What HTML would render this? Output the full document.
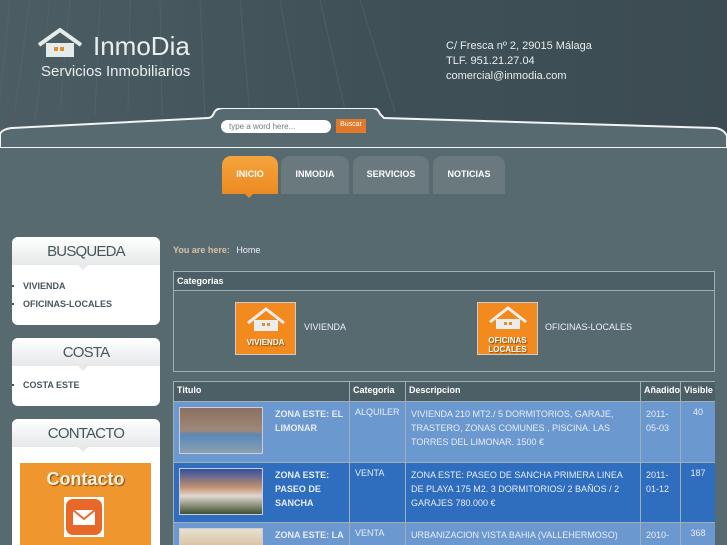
<!DOCTYPE html>
<html><head><meta charset="utf-8"><style>
*{margin:0;padding:0;box-sizing:border-box}
html{width:727px;height:545px;overflow:hidden}
body{width:727px;height:545px;overflow:hidden;background:#576a70;font-family:"Liberation Sans",sans-serif}
#wrap{position:relative;width:727px;height:545px;overflow:hidden}
.hdr{position:absolute;left:0;top:0;width:727px;height:140px;background:linear-gradient(90deg,#4c5d63 0%,#3f5157 50%,#3b4b51 100%)}
.a{position:absolute}
.w{color:#e8eeee}
.tab{position:absolute;top:156px;height:38px;background:#69797e;border-radius:9px 9px 0 0;color:#fff;font-size:9px;font-weight:bold;text-align:center;line-height:36px}
.box{position:absolute;left:12px;width:148px;background:#fff;border-radius:6px}
.box h3{height:28px;background:linear-gradient(#fff,#e6e8e9);border-radius:6px 6px 0 0;text-align:center;font-weight:normal;font-size:15px;color:#46565c;line-height:30px;letter-spacing:-0.8px;position:relative}
.box h3:after{content:"";position:absolute;left:66px;bottom:-5px;border:5px solid transparent;border-top-color:#e6e8e9;border-bottom:0}
.box li{list-style:none;font-size:9px;font-weight:bold;color:#46565c;margin-left:11px;height:18px;line-height:18px;position:relative}
.box li:before{content:"";position:absolute;left:-11px;top:8px;width:2px;height:2px;background:#46565c}
.tw{position:absolute;left:173px;top:381px;width:542px;height:164px;overflow:hidden}
table{border-collapse:collapse;width:542px;font-size:9px;table-layout:fixed}
td,th{border:1px solid #9fb0b4;vertical-align:top;padding:5px 5px;color:#e6eef8;overflow:hidden}
th{background:#4d5f66;text-align:left;color:#fff;height:20px;padding:3px 3px;font-size:9px}
.r1 td{background:#6c98d0}.r2 td{background:#2f6dbf}
.t{font-weight:bold;line-height:14px;width:70px;flex:none}
.d{line-height:14px}
.img{width:84px;height:47px;border:1px solid #ccd;display:block;flex:none}
</style></head><body><div id="wrap">
<div class="hdr"></div>
<svg class="a" style="left:0;top:0" width="727" height="140"><g stroke="#5a6b70" stroke-width="1" opacity=".5"><path d="M10 0 L0 100M30 0 L15 110M50 0 L35 120M70 0L60 110M100 0L95 115M130 0L128 110M160 0L162 115M200 0L205 120M240 0L250 115M280 0L300 110M320 0L345 110M360 0L395 112"/></g></svg>
<svg class="a" style="left:36px;top:28px" width="56" height="34"><path d="M3 17 L24 2 L45 17" fill="none" stroke="#e4eceb" stroke-width="4"/><rect x="10" y="15" width="28" height="14" fill="#e4eceb"/><rect x="18" y="19" width="4" height="4" fill="#e98a2c"/><rect x="24" y="19" width="4" height="4" fill="#e98a2c"/></svg>
<div class="a w" style="left:93px;top:31px;font-size:26px">InmoDia</div>
<div class="a w" style="left:41px;top:63px;font-size:15px">Servicios Inmobiliarios</div>
<div class="a w" style="left:446px;top:39px;font-size:11px;line-height:15px">C/ Fresca nº 2, 29015 Málaga<br>TLF. 951.21.27.04<br>comercial@inmodia.com</div>
<svg class="a" style="left:0;top:108px" width="727" height="40"><path d="M0 40 L0 26 Q2 21 12 20 L208 10 Q212 10 214 5 Q216 0 224 0 L372 0 Q378 0 380 6 L384 10 L715 20 Q724 21 727 28 L727 40 Z" fill="#566a70" stroke="#f2f4f4" stroke-width="2"/></svg>
<div class="a" style="left:221px;top:120px;width:110px;height:13px;background:#fff;border-radius:7px;font-size:8px;color:#778;padding-left:8px;line-height:13px">type a word here...</div>
<div class="a" style="left:336px;top:119px;width:30px;height:14px;background:#e2782a;font-size:7px;color:#fff;text-align:center;line-height:12px">Buscar</div>
<div class="tab" style="left:222px;width:56px;background:linear-gradient(#f6a43c,#ec8a22)">INICIO</div>
<div class="a" style="left:244px;top:193px;border:5px solid transparent;border-top-color:#ec8a22"></div>
<div class="tab" style="left:281px;width:68px">INMODIA</div>
<div class="tab" style="left:353px;width:76px">SERVICIOS</div>
<div class="tab" style="left:433px;width:72px">NOTICIAS</div>
<div class="box" style="top:237px;height:88px"><h3>BUSQUEDA</h3><ul style="margin-top:12px"><li>VIVIENDA</li><li>OFICINAS-LOCALES</li></ul></div>
<div class="box" style="top:338px;height:68px"><h3>COSTA</h3><ul style="margin-top:10px"><li>COSTA ESTE</li></ul></div>
<div class="box" style="top:419px;height:126px;border-radius:6px 6px 0 0"><h3>CONTACTO</h3></div>
<div class="a" style="left:20px;top:463px;width:131px;height:82px;background:#f0962e"><div style="color:#f8f0e0;font-weight:bold;font-size:18px;text-align:center;margin-top:6px;text-shadow:1px 1px 1px #7a4a10">Contacto</div>
<div style="position:absolute;left:44px;top:34px;width:40px;height:40px;background:#fff;padding:2px"><div style="width:36px;height:36px;background:#e8682a;border-radius:7px;position:relative"><svg width="36" height="36"><rect x="7" y="11" width="22" height="15" fill="#fff"/><path d="M7 11 L18 20 L29 11" fill="none" stroke="#e8682a" stroke-width="2"/></svg></div></div></div>
<div class="a" style="left:173px;top:245px;font-size:9px;color:#d8c2a8;font-weight:bold">You are here: <span style="color:#eef;font-weight:normal;margin-left:4px">Home</span></div>
<div class="a" style="left:173px;top:271px;width:542px;height:101px;border:1px solid #9fb0b4"><div style="height:19px;background:#4d5f66;border-bottom:1px solid #9fb0b4;color:#fff;font-size:9px;font-weight:bold;padding:4px 3px">Categorias</div></div>
<div class="a" style="left:235px;top:302px;width:61px;height:53px;background:#f28a1e;border:1px solid #ccc"><svg width="61" height="30"><path d="M12 20 L30 6 L48 20" fill="none" stroke="#eee" stroke-width="3"/><rect x="18" y="17" width="24" height="11" fill="#e8eeee"/><rect x="26" y="20" width="3" height="3" fill="#e98a2c"/><rect x="31" y="20" width="3" height="3" fill="#e98a2c"/></svg><div style="font-size:8px;font-weight:bold;color:#fff;text-align:center;text-shadow:1px 1px 1px #7a4a10">VIVIENDA</div></div>
<div class="a" style="left:304px;top:322px;font-size:9px;color:#eef">VIVIENDA</div>
<div class="a" style="left:477px;top:302px;width:61px;height:53px;background:#f28a1e;border:1px solid #ccc"><svg width="61" height="28"><path d="M12 19 L30 5 L48 19" fill="none" stroke="#eee" stroke-width="3"/><rect x="18" y="16" width="24" height="10" fill="#e8eeee"/><rect x="26" y="19" width="3" height="3" fill="#e98a2c"/><rect x="31" y="19" width="3" height="3" fill="#e98a2c"/></svg><div style="font-size:8px;font-weight:bold;color:#fff;text-align:center;line-height:9px;text-shadow:1px 1px 1px #7a4a10">OFICINAS<br>LOCALES</div></div>
<div class="a" style="left:545px;top:322px;font-size:9px;color:#eef">OFICINAS-LOCALES</div>
<div class="tw"><table>
<colgroup><col style="width:176px"><col style="width:56px"><col style="width:235px"><col style="width:40px"><col style="width:35px"></colgroup>
<tr><th>Titulo</th><th>Categoria</th><th>Descripcion</th><th>Añadido</th><th>Visible</th></tr>
<tr class="r1" style="height:61px"><td><div style="display:flex;gap:12px"><div class="img" style="background:linear-gradient(#8a7060 0,#a08878 50%,#5a88b8 60%,#8aa0b0 100%)"></div><div class="t">ZONA ESTE: EL LIMONAR</div></div></td><td>ALQUILER</td><td class="d">VIVIENDA 210 MT2./ 5 DORMITORIOS, GARAJE, TRASTERO, ZONAS COMUNES , PISCINA. LAS TORRES DEL LIMONAR. 1500 €</td><td class="d">2011-05-03</td><td style="text-align:center">40</td></tr>
<tr class="r2" style="height:60px"><td><div style="display:flex;gap:12px"><div class="img" style="background:linear-gradient(#3050a0,#c09070 40%,#e0d8d0 60%,#405030 100%)"></div><div class="t">ZONA ESTE: PASEO DE SANCHA</div></div></td><td>VENTA</td><td class="d">ZONA ESTE: PASEO DE SANCHA PRIMERA LINEA DE PLAYA 175 M2. 3 DORMITORIOS/ 2 BAÑOS / 2 GARAJES 780.000 €</td><td class="d">2011-01-12</td><td style="text-align:center">187</td></tr>
<tr class="r1" style="height:60px"><td><div style="display:flex;gap:12px"><div class="img" style="background:linear-gradient(#e8e0d0,#c09060)"></div><div class="t">ZONA ESTE: LA CALA DEL</div></div></td><td>VENTA</td><td class="d">URBANIZACION VISTA BAHIA (VALLEHERMOSO) FASE 1, ESCALERA 1, 3ºB</td><td class="d">2010-10-12</td><td style="text-align:center">368</td></tr>
</table></div>
</div></body></html>
